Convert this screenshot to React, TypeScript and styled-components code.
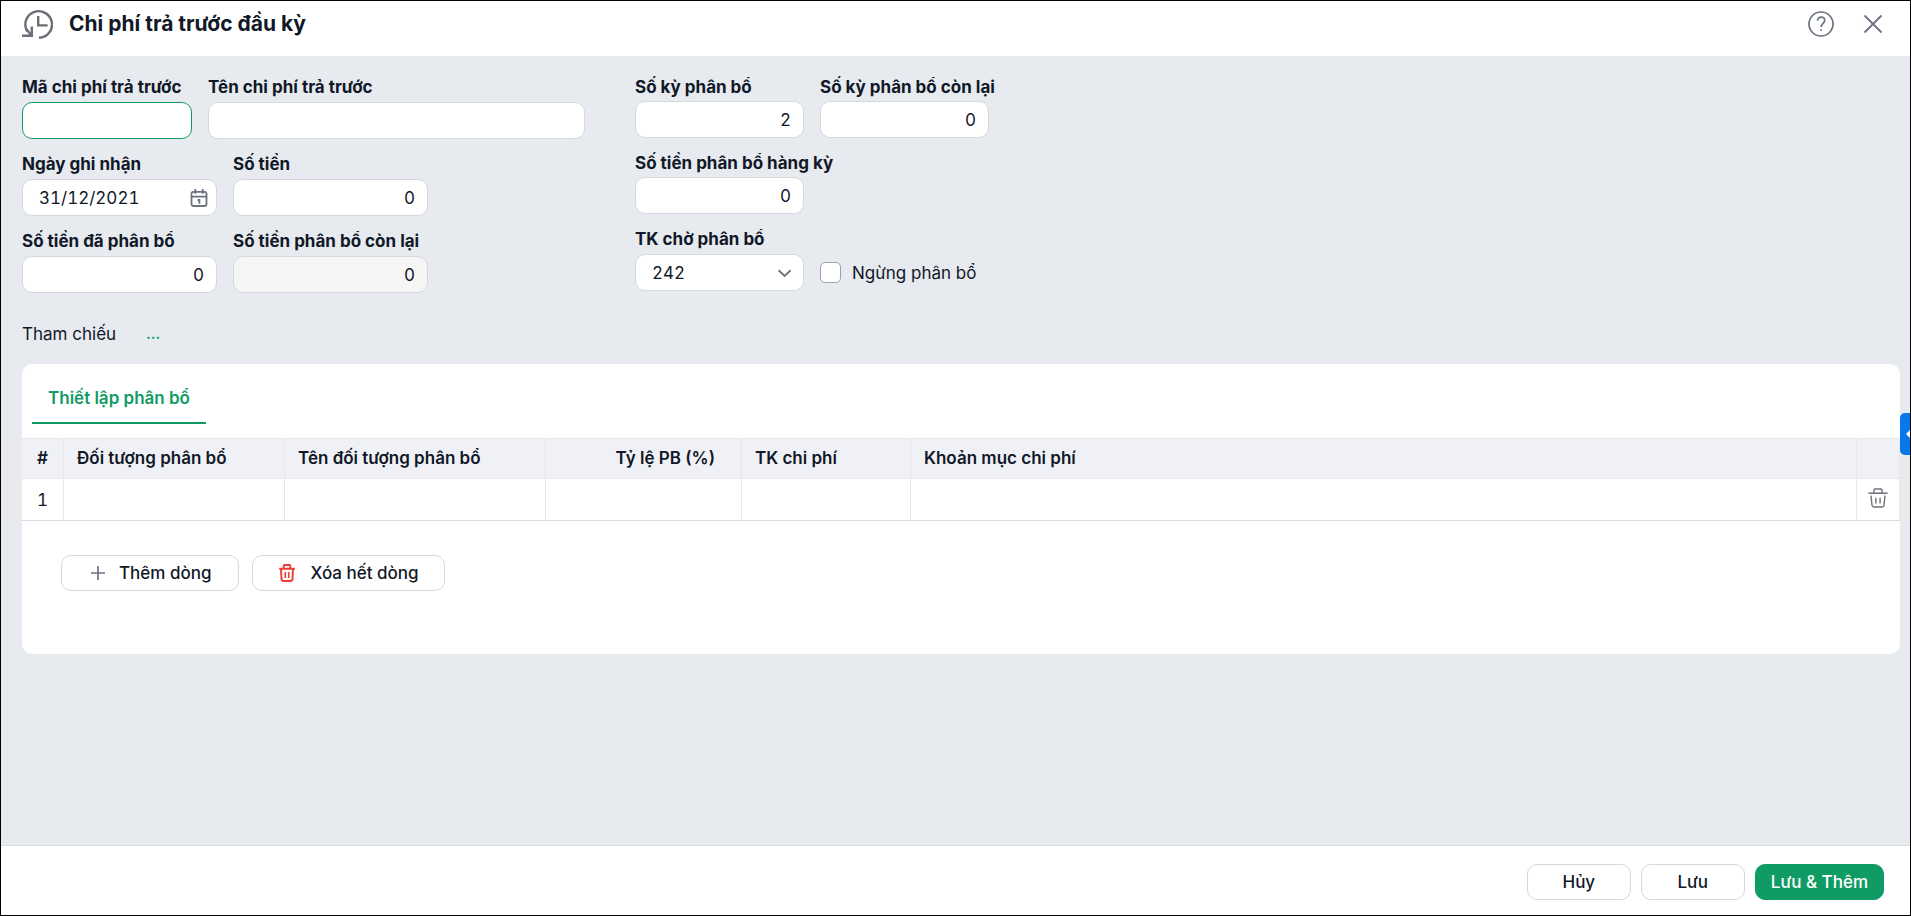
import React, { useState } from "react";
import styled, { createGlobalStyle, css } from "styled-components";

const GlobalStyle = createGlobalStyle`
  *, *::before, *::after { box-sizing: border-box; }
  body {
    margin: 0;
    font-family: Inter, "Liberation Sans", sans-serif;
    font-size: 17px;
    line-height: 24px;
    color: #111827;
  }
  input, select, button { font: inherit; color: inherit; }
`;

const Dialog = styled.div`
  position: relative;
  display: flex;
  flex-direction: column;
  min-height: 100vh;
  border: 1px solid #000;
  background: #e7eaef;
`;

const Header = styled.header`
  display: flex;
  align-items: center;
  height: 55px;
  padding: 0 23px 10px 20px;
  background: #fff;
`;

const Title = styled.h1`
  flex: 1;
  margin: 0 0 0 16px;
  font-size: 21px;
  line-height: 24px;
  font-weight: 700;
`;

const HeaderActions = styled.div`
  display: flex;
  gap: 24px;
`;

const IconButton = styled.button`
  display: flex;
  align-items: center;
  justify-content: center;
  width: 28px;
  height: 28px;
  padding: 0;
  border: 0;
  background: none;
  color: #6b7280;
`;

const Body = styled.main`
  flex: 1;
  padding: 19px 10px 0 21px;
`;

const Form = styled.form`
  display: flex;
  gap: 50px;
`;

const FieldGroup = styled.div`
  display: flex;
  flex-direction: column;
  gap: 13px;
`;

const FieldRow = styled.div`
  display: flex;
  align-items: flex-end;
  gap: 16px;
`;

const FieldBox = styled.div<{ $width: number; $gap: number }>`
  display: flex;
  flex-direction: column;
  gap: ${(p) => p.$gap}px;
  width: ${(p) => p.$width}px;
`;

const Label = styled.label`
  font-weight: 700;
  line-height: 24px;
  white-space: nowrap;
`;

const controlStyle = css`
  width: 100%;
  height: 37px;
  border: 1px solid #d5d8dd;
  border-radius: 10px;
  background: #fff;
  outline: none;
  font-feature-settings: "tnum";
`;

const TextInput = styled.input<{ $numeric?: boolean }>`
  ${controlStyle}
  padding: 0 ${(p) => (p.$numeric ? 12 : 16)}px;
  text-align: ${(p) => (p.$numeric ? "right" : "left")};
  &:focus { border-color: #119b64; }
  &:read-only { background: #f5f5f5; }
`;

const ControlWrap = styled.div`
  position: relative;
  display: flex;
`;

const TrailingIcon = styled.span`
  position: absolute;
  top: 0;
  right: 9px;
  bottom: 0;
  display: flex;
  align-items: center;
  color: #6b7280;
  pointer-events: none;
`;

const Select = styled.select`
  ${controlStyle}
  padding: 0 16px;
  appearance: none;
`;

const CheckLabel = styled.label`
  display: flex;
  align-items: center;
  gap: 11px;
  height: 37px;
`;

const Checkbox = styled.input`
  appearance: none;
  width: 21px;
  height: 21px;
  margin: 0;
  border: 1px solid #9ca3af;
  border-radius: 5px;
  background: #fff;
  &:checked { background: #119b64; }
`;

const Reference = styled.div`
  display: flex;
  gap: 30px;
  margin: 29px 0 18px;
`;

const ReferenceLink = styled.a`
  color: #119b64;
  font-size: 14px;
  font-weight: 700;
  text-decoration: none;
`;

const Card = styled.section`
  height: 290px;
  border-radius: 10px;
  background: #fff;
`;

const Tabs = styled.div`
  display: flex;
  height: 74px;
  padding: 8px 10px 14px;
`;

const Tab = styled.button`
  padding: 2px 16px 0;
  border: 0;
  border-bottom: 2px solid #119b64;
  background: none;
  color: #119b64;
  font-weight: 600;
`;

const GridBand = styled.div`
  margin: 0 -10px 0 -20px;
  padding: 0 11px 0 20px;
  background: #ebe9ee;
`;

const Table = styled.table`
  width: 100%;
  border-collapse: separate;
  border-spacing: 0;
  table-layout: fixed;
`;

const cellStyle = css<{ $align?: string }>`
  padding: 0 13px;
  border-right: 1px solid #e5e7eb;
  text-align: ${(p) => p.$align || "left"};
  &:last-child { border-right: 0; }
`;

const Th = styled.th<{ $align?: string; $width?: number; $wide?: boolean }>`
  ${cellStyle}
  width: ${(p) => (p.$width ? p.$width + "px" : "auto")};
  height: 41px;
  padding-bottom: 2px;
  border-top: 1px solid #e5e7eb;
  border-bottom: 1px solid #e5e7eb;
  background: #f0f1f6;
  font-weight: 600;
  ${(p) => p.$wide && "padding-right: 26px;"}
`;

const Td = styled.td<{ $align?: string; $slim?: boolean }>`
  ${cellStyle}
  height: 42px;
  border-bottom: 1px solid #d9dbdf;
  background: #fff;
  font-feature-settings: "tnum";
  ${(p) => p.$slim && "padding: 0 7px 4px;"}
`;

const RowActions = styled.div`
  display: flex;
  gap: 13px;
  padding: 34px 0 0 39px;
`;

const Button = styled.button<{ $primary?: boolean; $pad: number }>`
  display: inline-flex;
  align-items: center;
  justify-content: center;
  gap: 14px;
  min-width: 104px;
  height: 36px;
  padding: 0 ${(p) => p.$pad}px;
  border: 1px solid ${(p) => (p.$primary ? "#119b64" : "#d5d8dd")};
  border-radius: 10px;
  background: ${(p) => (p.$primary ? "#119b64" : "#fff")};
  color: ${(p) => (p.$primary ? "#fff" : "#111827")};
  font-weight: 500;
  white-space: nowrap;
`;

const Footer = styled.footer`
  display: flex;
  justify-content: flex-end;
  gap: 10px;
  height: 70px;
  padding: 18px 26px 0;
  border-top: 1px solid #d9dce1;
  background: #fff;
`;

const SideHandle = styled.button`
  position: absolute;
  top: 412px;
  right: 0;
  display: flex;
  justify-content: flex-end;
  align-items: center;
  width: 10px;
  height: 42px;
  padding: 0;
  border: 0;
  border-radius: 5px 0 0 5px;
  background: #0878e8;
`;

const HistoryIcon = () => (
  <svg width="32" height="32" viewBox="0 0 32 32" fill="none" stroke="#6b6e76" strokeWidth="2.4">
    <path d="M6.3 23.4A13.3 13.3 0 1 1 18 29.8" />
    <path d="M17.2 8v9.4h9.4" />
    <path d="M1 27.8h9.8V18.5M10.4 27.4L4.8 20.6" />
  </svg>
);

const HelpIcon = () => (
  <svg width="28" height="28" viewBox="0 0 28 28" fill="none" stroke="currentColor" strokeWidth="1.7">
    <circle cx="14" cy="14" r="12" />
    <path d="M10.6 10.8c0-2.2 1.4-3.6 3.5-3.6s3.6 1.3 3.6 3.2c0 2.9-3.5 3-3.5 6.6" />
    <path d="M13.2 20h1.8" />
  </svg>
);

const CloseIcon = () => (
  <svg width="28" height="28" viewBox="0 0 28 28" fill="none" stroke="currentColor" strokeWidth="1.8">
    <path d="M5.5 5.5l17 17M22.5 5.5l-17 17" />
  </svg>
);

const CalendarIcon = () => (
  <svg width="18" height="20" viewBox="0 0 18 20" fill="none" stroke="currentColor" strokeWidth="1.8">
    <rect x="1.5" y="3.8" width="15" height="14.2" rx="2" />
    <path d="M1.5 8.6h15M5.3 1v4.8M12.7 1v4.8M7.6 12h1.8v3.8" />
  </svg>
);

const ChevronIcon = () => (
  <svg width="20" height="20" viewBox="0 0 20 20" fill="none" stroke="currentColor" strokeWidth="1.9">
    <path d="M3.6 7.2l6 5.8 6-5.8" />
  </svg>
);

const PlusIcon = () => (
  <svg width="16" height="16" viewBox="0 0 16 16" fill="none" stroke="#6b7280" strokeWidth="1.7">
    <path d="M9 1v14M2 8h14" />
  </svg>
);

const TrashIcon = () => (
  <svg width="20" height="20" viewBox="0 0 20 20" fill="none" stroke="#6f727a" strokeWidth="1.4">
    <path d="M.4 5.3h19.2M6 5V1.9Q6 1 7 1h6q1 0 1 .9V5M3 7.6l1 9.6q.2 1.8 2 1.8h8q1.8 0 2-1.8l1-9.6M7.9 9.7V15.5M12.1 9.7V15.5" />
  </svg>
);

const RedTrashIcon = () => (
  <svg width="18" height="18" viewBox="0 0 18 18" fill="none" stroke="#ee3b34" strokeWidth="1.9">
    <path d="M1.2 4.8h15.6M5.7 4.5V1.9Q5.7 1 6.5 1h5q.8 0 .8.9v2.6M3 5l.5 10.2q.2 1.8 2 1.8h7q1.8 0 2-1.8L15 5" />
    <path d="M7.3 8v6M10.7 8v6" strokeWidth="1.6" />
  </svg>
);

interface FieldProps {
  id: string;
  label: string;
  width: number;
  gap?: number;
  value?: string;
  numeric?: boolean;
  readOnly?: boolean;
  autoFocus?: boolean;
  icon?: React.ReactNode;
}

const Field = ({ id, label, width, gap = 3, value = "", icon, numeric, readOnly, autoFocus }: FieldProps) => (
  <FieldBox $width={width} $gap={gap}>
    <Label htmlFor={id}>{label}</Label>
    <ControlWrap>
      <TextInput id={id} $numeric={numeric} defaultValue={value} readOnly={readOnly} autoFocus={autoFocus} />
      {icon && <TrailingIcon>{icon}</TrailingIcon>}
    </ControlWrap>
  </FieldBox>
);

export default function App() {
  const [stopped, setStopped] = useState(false);
  return (
    <>
      <GlobalStyle />
      <Dialog role="dialog" aria-labelledby="dialog-title">
        <Header>
          <HistoryIcon />
          <Title id="dialog-title">Chi phí trả trước đầu kỳ</Title>
          <HeaderActions>
            <IconButton aria-label="Trợ giúp"><HelpIcon /></IconButton>
            <IconButton aria-label="Đóng"><CloseIcon /></IconButton>
          </HeaderActions>
        </Header>

        <Body>
          <Form>
            <FieldGroup>
              <FieldRow>
                <Field id="code" label="Mã chi phí trả trước" width={170} autoFocus />
                <Field id="name" label="Tên chi phí trả trước" width={377} />
              </FieldRow>
              <FieldRow>
                <Field id="date" label="Ngày ghi nhận" width={195} value="31/12/2021" icon={<CalendarIcon />} />
                <Field id="amount" label="Số tiền" width={195} value="0" numeric />
              </FieldRow>
              <FieldRow>
                <Field id="allocated" label="Số tiền đã phân bổ" width={195} value="0" numeric />
                <Field id="remaining" label="Số tiền phân bổ còn lại" width={195} value="0" numeric readOnly />
              </FieldRow>
            </FieldGroup>

            <FieldGroup>
              <FieldRow>
                <Field id="periods" label="Số kỳ phân bổ" width={169} gap={2} value="2" numeric />
                <Field id="periods-left" label="Số kỳ phân bổ còn lại" width={169} gap={2} value="0" numeric />
              </FieldRow>
              <FieldRow>
                <Field id="per-period" label="Số tiền phân bổ hàng kỳ" width={169} gap={2} value="0" numeric />
              </FieldRow>
              <FieldRow>
                <FieldBox $width={169} $gap={3}>
                  <Label htmlFor="account">TK chờ phân bổ</Label>
                  <ControlWrap>
                    <Select id="account" defaultValue="242">
                      <option>242</option>
                    </Select>
                    <TrailingIcon><ChevronIcon /></TrailingIcon>
                  </ControlWrap>
                </FieldBox>
                <CheckLabel>
                  <Checkbox type="checkbox" checked={stopped} onChange={(e) => setStopped(e.target.checked)} />
                  Ngừng phân bổ
                </CheckLabel>
              </FieldRow>
            </FieldGroup>
          </Form>

          <Reference>
            <span>Tham chiếu</span>
            <ReferenceLink href="#reference">...</ReferenceLink>
          </Reference>

          <Card>
            <Tabs role="tablist">
              <Tab role="tab" aria-selected="true">Thiết lập phân bổ</Tab>
            </Tabs>
            <GridBand>
              <Table>
                <thead>
                  <tr>
                    <Th $width={42} $align="center">#</Th>
                    <Th $width={221}>Đối tượng phân bổ</Th>
                    <Th $width={261}>Tên đối tượng phân bổ</Th>
                    <Th $width={196} $align="right" $wide>Tỷ lệ PB (%)</Th>
                    <Th $width={169}>TK chi phí</Th>
                    <Th>Khoản mục chi phí</Th>
                    <Th $width={42} />
                  </tr>
                </thead>
                <tbody>
                  <tr>
                    <Td $align="center">1</Td>
                    <Td />
                    <Td />
                    <Td />
                    <Td />
                    <Td />
                    <Td $align="center" $slim>
                      <IconButton aria-label="Xóa dòng"><TrashIcon /></IconButton>
                    </Td>
                  </tr>
                </tbody>
              </Table>
            </GridBand>
            <RowActions>
              <Button $pad={27}><PlusIcon />Thêm dòng</Button>
              <Button $pad={25}><RedTrashIcon />Xóa hết dòng</Button>
            </RowActions>
          </Card>
        </Body>

        <Footer>
          <Button $pad={16}>Hủy</Button>
          <Button $pad={16}>Lưu</Button>
          <Button $pad={15} $primary>Lưu &amp; Thêm</Button>
        </Footer>

        <SideHandle aria-label="Mở bảng phụ">
          <svg width="4" height="8" viewBox="0 0 4 8"><path d="M4 0L0 4l4 4z" fill="#fff" /></svg>
        </SideHandle>
      </Dialog>
    </>
  );
}
